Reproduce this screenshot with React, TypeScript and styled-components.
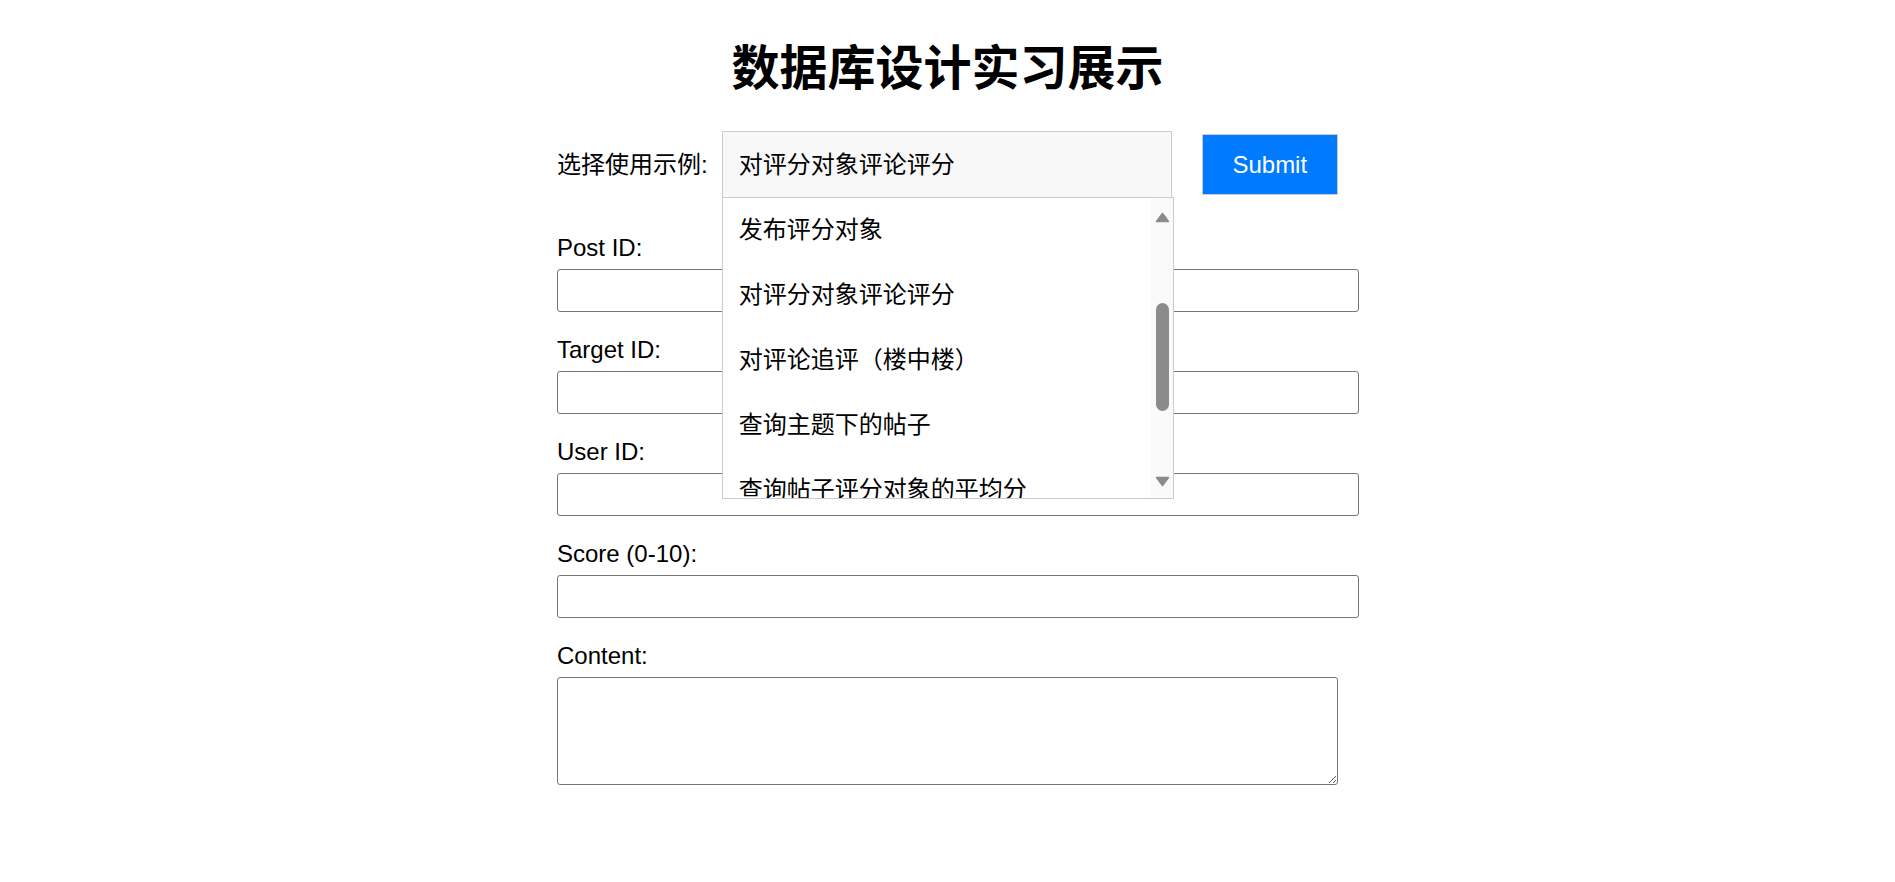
import React from "react";
import styled, { createGlobalStyle } from "styled-components";

const GlobalStyle = createGlobalStyle`
  html, body {
    margin: 0;
    padding: 0;
    background: #ffffff;
  }
  body {
    font-family: "Liberation Sans", "Noto Sans CJK SC", sans-serif;
    color: #000000;
  }
`;

const Page = styled.div`
  padding-top: 41px;
`;

const Title = styled.h1`
  margin: 0 0 34px;
  font-size: 48px;
  line-height: 56px;
  font-weight: bold;
  text-align: center;
`;

const Form = styled.form`
  width: 781px;
  margin: 0 auto;
  display: flex;
  flex-direction: column;
  gap: 24px;
`;

const SelectRow = styled.div`
  display: flex;
  align-items: center;
  margin-bottom: 12px;
`;

const SelectLabel = styled.label`
  font-size: 24px;
  line-height: 28px;
  margin-right: 14px;
  white-space: nowrap;
`;

const SelectWrap = styled.div`
  position: relative;
  width: 450px;
  margin-right: 30px;
`;

const SelectBox = styled.div`
  height: 67px;
  box-sizing: border-box;
  border: 1px solid #cccccc;
  background: #f8f8f8;
  padding: 0 16px;
  display: flex;
  align-items: center;
  font-size: 24px;
  line-height: 28px;
`;

const Listbox = styled.ul`
  position: absolute;
  top: calc(100% - 1px);
  left: 0;
  width: calc(100% + 2px);
  height: 302px;
  box-sizing: border-box;
  margin: 0;
  padding: 0;
  list-style: none;
  border: 1px solid #cccccc;
  background: #ffffff;
  overflow: hidden;
  z-index: 2;
`;

const Option = styled.li`
  height: 65px;
  line-height: 63px;
  padding: 0 16px;
  font-size: 24px;
  white-space: nowrap;
`;

const Track = styled.div`
  position: absolute;
  top: 0;
  right: 0;
  bottom: 0;
  width: 22px;
  background: #fafafa;
`;

const Arrow = styled.svg<{ $down?: boolean }>`
  position: absolute;
  left: 4px;
  width: 15px;
  height: 11px;
  ${(p) => (p.$down ? "bottom: 11px;" : "top: 14px;")}
`;

const Thumb = styled.div`
  position: absolute;
  left: 5px;
  top: 105px;
  width: 13px;
  height: 108px;
  border-radius: 7px;
  background: #8b8b8b;
`;

const SubmitButton = styled.button`
  width: 136.5px;
  height: 61px;
  box-sizing: border-box;
  border: 1px solid #cccccc;
  background: #007bff;
  color: #ffffff;
  font-family: "Liberation Sans", "Noto Sans CJK SC", sans-serif;
  font-size: 24px;
  padding: 0;
  cursor: pointer;
`;

const Field = styled.div`
  display: flex;
  flex-direction: column;
  gap: 7px;
`;

const FieldLabel = styled.label`
  font-size: 24px;
  line-height: 28px;
`;

const TextInput = styled.input`
  width: calc(100% + 21px);
  height: 43px;
  box-sizing: border-box;
  margin: 0;
  padding: 0 10px;
  border: 1px solid #767676;
  border-radius: 3px;
  font-size: 20px;
  font-family: "Liberation Sans", sans-serif;
  background: #ffffff;
`;

const TextArea = styled.textarea`
  display: block;
  width: 100%;
  height: 108px;
  box-sizing: border-box;
  margin: 0;
  padding: 6px 10px;
  border: 1px solid #767676;
  border-radius: 3px;
  font-size: 20px;
  font-family: "Liberation Sans", sans-serif;
  background: #ffffff;
`;

const options = [
  "发布评分对象",
  "对评分对象评论评分",
  "对评论追评（楼中楼）",
  "查询主题下的帖子",
  "查询帖子评分对象的平均分",
];

const fields = ["Post ID:", "Target ID:", "User ID:", "Score (0-10):"];

export default function App() {
  return (
    <>
      <GlobalStyle />
      <Page>
        <Title>数据库设计实习展示</Title>
        <Form onSubmit={(e) => e.preventDefault()}>
          <SelectRow>
            <SelectLabel>选择使用示例:</SelectLabel>
            <SelectWrap>
              <SelectBox>对评分对象评论评分</SelectBox>
              <Listbox role="listbox">
                {options.map((o) => (
                  <Option key={o} role="option">
                    {o}
                  </Option>
                ))}
                <Track>
                  <Arrow viewBox="0 0 15 11">
                    <path
                      d="M7.5 1.5 L13.5 9.5 H1.5 Z"
                      fill="#8b8b8b"
                      stroke="#8b8b8b"
                      strokeWidth="1.5"
                      strokeLinejoin="round"
                    />
                  </Arrow>
                  <Thumb />
                  <Arrow $down viewBox="0 0 15 11">
                    <path
                      d="M1.5 1.5 H13.5 L7.5 9.5 Z"
                      fill="#8b8b8b"
                      stroke="#8b8b8b"
                      strokeWidth="1.5"
                      strokeLinejoin="round"
                    />
                  </Arrow>
                </Track>
              </Listbox>
            </SelectWrap>
            <SubmitButton type="submit">Submit</SubmitButton>
          </SelectRow>
          {fields.map((f) => (
            <Field key={f}>
              <FieldLabel>{f}</FieldLabel>
              <TextInput type="text" />
            </Field>
          ))}
          <Field>
            <FieldLabel>Content:</FieldLabel>
            <TextArea />
          </Field>
        </Form>
      </Page>
    </>
  );
}
